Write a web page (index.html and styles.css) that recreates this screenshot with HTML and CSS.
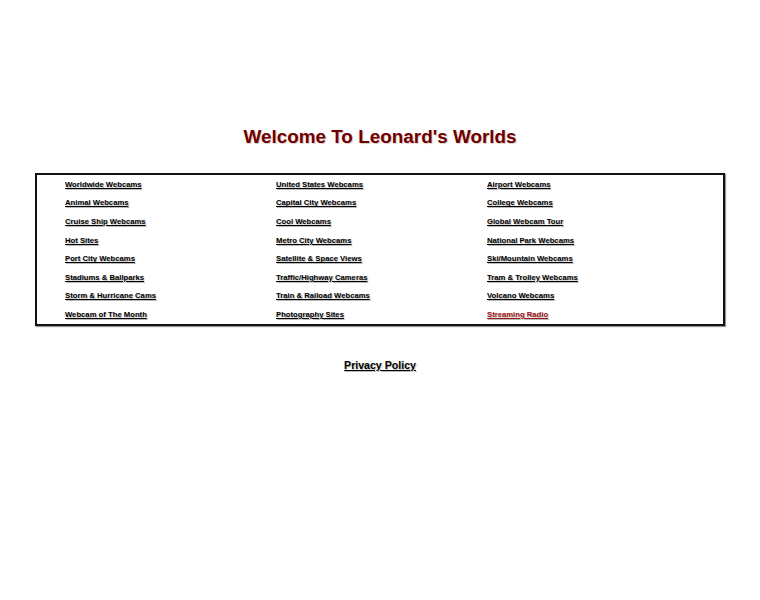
FILE: index.html
```html
<!DOCTYPE html>
<html>
<head>
<meta charset="utf-8">
<title>Welcome To Leonard's Worlds</title>
<link rel="stylesheet" href="styles.css">
</head>
<body>
<div class="page">
  <h1 class="title">Welcome To Leonard's Worlds</h1>
  <div class="links">
    <a href="#">Worldwide Webcams</a>
    <a href="#">United States Webcams</a>
    <a href="#">Airport Webcams</a>
    <a href="#">Animal Webcams</a>
    <a href="#">Capital City Webcams</a>
    <a href="#">College Webcams</a>
    <a href="#">Cruise Ship Webcams</a>
    <a href="#">Cool Webcams</a>
    <a href="#">Global Webcam Tour</a>
    <a href="#">Hot Sites</a>
    <a href="#">Metro City Webcams</a>
    <a href="#">National Park Webcams</a>
    <a href="#">Port City Webcams</a>
    <a href="#">Satellite &amp; Space Views</a>
    <a href="#">Ski/Mountain Webcams</a>
    <a href="#">Stadiums &amp; Ballparks</a>
    <a href="#">Traffic/Highway Cameras</a>
    <a href="#">Tram &amp; Trolley Webcams</a>
    <a href="#">Storm &amp; Hurricane Cams</a>
    <a href="#">Train &amp; Raiload Webcams</a>
    <a href="#">Volcano Webcams</a>
    <a href="#">Webcam of The Month</a>
    <a href="#">Photography Sites</a>
    <a href="#" class="radio">Streaming Radio</a>
  </div>
  <div class="footer"><a href="#" class="privacy">Privacy Policy</a></div>
</div>
</body>
</html>
```
FILE: styles.css
```css
html, body {
  margin: 0;
  padding: 0;
  background: #ffffff;
}
.page {
  font-family: "Liberation Sans", Arial, sans-serif;
  padding-top: 126px;
}
.title {
  margin: 0;
  text-align: center;
  font-size: 18.9px;
  line-height: 22px;
  font-weight: bold;
  color: #700000;
  text-shadow: 1px 1px 1px #d8caca;
}
.links {
  margin: 25px auto 0;
  border: 2px solid #111;
  box-shadow: 1px 1px 1px #999;
  padding-left: 28px;
  box-sizing: border-box;
  width: 690px;
  display: grid;
  grid-template-columns: 211px 211px 1fr;
  grid-auto-rows: 18.6px;
  align-items: center;
}
.links a {
  font-size: 7.7px;
  font-weight: bold;
  color: #000;
  text-decoration: underline;
  text-shadow: 1px 1px 1px #bbb;
  justify-self: start;
}
.links a.radio {
  color: #9c1414;
}
.footer {
  text-align: center;
  margin-top: 29px;
}
.privacy {
  font-size: 10.6px;
  font-weight: bold;
  color: #000;
  text-decoration: underline;
  text-shadow: 1px 1px 1px #bbb;
}
```
